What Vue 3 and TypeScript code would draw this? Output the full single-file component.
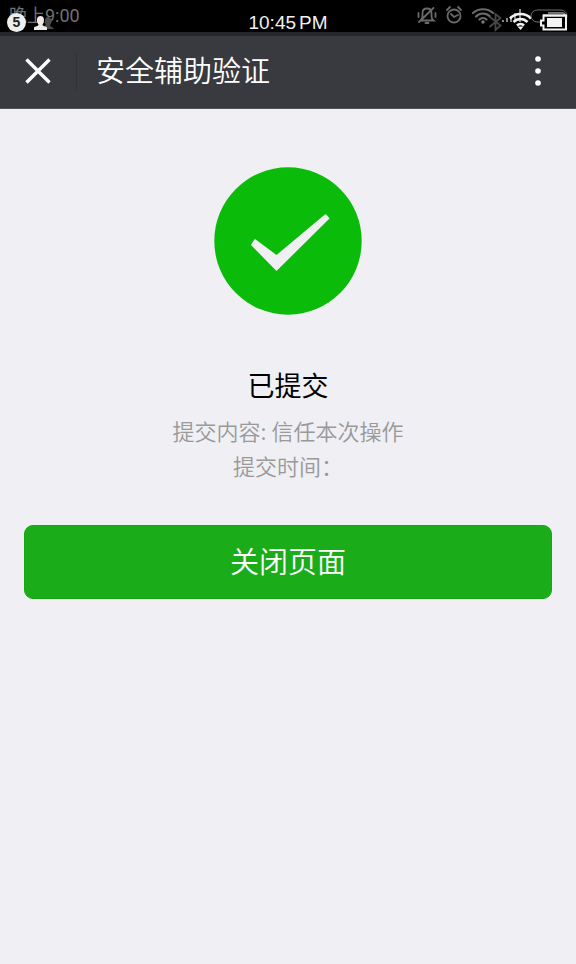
<script setup lang="ts">
import { ref } from 'vue'

interface Detail {
  label: string
  value: string
}

const title = '安全辅助验证'
const details = ref<Detail[]>([
  { label: '提交内容: ', value: '信任本次操作' },
  { label: '提交时间：', value: '' },
])

function closePage(): void {
  window.close()
}
</script>

<template>
  <div class="page">
    <div class="status">
      <div class="status-left">
        <span class="local-time">晚上9:00</span>
        <span class="count">5</span>
        <svg class="person" width="26" height="16" viewBox="0 0 26 16" aria-hidden="true">
          <path d="M10 14v-2l4-2c-2-3-1-8 2-8s5 5 2 8c0 2 3 2 4 4z" fill="#4d4d4d" />
          <path d="M2 15v-2.500c1-1.500 4.500-1 4.500-3C4 6 4.500 1 8.500 1s4.500 5 2 8.500c0 2 3.500 1.500 4.500 3V15z" fill="#ececec" />
        </svg>
      </div>
      <div class="clock"><span>10:45</span><span>PM</span></div>
      <svg class="status-right" width="160" height="32" viewBox="0 0 160 32" aria-hidden="true">
        <g fill="none" stroke="#6a6a6a" stroke-width="1.800" stroke-linecap="round">
          <path d="M4.500 20.500H17.500Q15.500 19 15.500 16V13C15.500 10 13.500 8.500 11 8.500S6.500 10 6.500 13V16Q6.500 19 4.500 20.500M9.500 23h3M3 22L17.500 8M2.500 13v4M19.500 13v4" />
          <circle cx="38" cy="16" r="6.500" />
          <path d="M35 14l3 3 4-2M31 10l3-3M45 10l-3-3" />
          <path d="M57 13c5.500-5 14.500-5 20 0M60 16.500c4-4 10-4 14 0M63.500 19.500c2-2 5-2 7 0" stroke-width="2.200" />
          <path d="M74 17l10.500 8.500-5 4.500V14l5 4-10.500 8.500" stroke="#484848" />
        </g>
        <circle cx="67" cy="22" r="1.800" fill="#777" />
        <g fill="#858585">
          <path d="M86 20h2v2h-2zM90 18h2v4h-2zM94 16h2v6h-2zM98 13h2v9h-2zM103 9h2v13h-2z" />
        </g>
        <g fill="none" stroke="#f2f2f2" stroke-width="2.600">
          <path d="M94 18.500c5.500-6 15.500-6 21 0M97.500 22c4-4 10-4 14 0M101 25.500c2-2 5-2 7 0" />
        </g>
        <path d="M101.500 26.500h6l-3 3.500z" fill="#f2f2f2" />
        <rect x="115" y="10" width="36" height="12" rx="6" fill="none" stroke="#6d6d6d" />
        <path d="M132 12h14c3 0 4 2 4 4H132z" fill="#777" />
        <path d="M127.500 15.500h22.500v14h-22.500v-4h-2.500v-5h2.500z" fill="#000" stroke="#f2f2f2" stroke-width="2" />
        <path d="M132 13h15v3h-15z" fill="#666" />
        <path d="M127 15.500h23" stroke="#f2f2f2" stroke-width="2" />
        <rect x="131" y="18" width="15" height="9" fill="#f2f2f2" />
      </svg>
    </div>

    <header class="bar">
      <button class="icon-button close" type="button" aria-label="关闭" @click="closePage">
        <svg width="26" height="26" viewBox="0 0 26 26" aria-hidden="true">
          <path d="M1.500 1.500L24.500 24.500M24.500 1.500L1.500 24.500" stroke="#fff" stroke-width="3.400" />
        </svg>
      </button>
      <h1 class="title">{{ title }}</h1>
      <button class="icon-button more" type="button" aria-label="更多">
        <svg width="6" height="32" viewBox="0 0 6 32" aria-hidden="true">
          <circle cx="3" cy="4" r="2.800" fill="#fff" />
          <circle cx="3" cy="16" r="2.800" fill="#fff" />
          <circle cx="3" cy="28" r="2.800" fill="#fff" />
        </svg>
      </button>
    </header>

    <main class="content">
      <svg class="mark" width="148" height="148" viewBox="0 0 148 148" aria-hidden="true">
        <circle cx="74" cy="74" r="73.700" fill="#0bbb0a" />
        <path d="M41 72Q39 74 37 78L62.500 104L115.500 51.500Q114 49 111.500 47L62.500 88Z" fill="#efeff4" />
      </svg>
      <h2 class="result">已提交</h2>
      <div class="details">
        <p v-for="item in details" :key="item.label" class="detail">{{ item.label }}{{ item.value }}</p>
      </div>
      <button class="primary" type="button" @click="closePage">关闭页面</button>
    </main>
  </div>
</template>

<style>
body {
  margin: 0;
  background: #efeff4;
}
</style>

<style scoped>
.page {
  min-height: 100vh;
  background: #efeff4;
  font-family: "Noto Sans CJK SC", sans-serif;
}

.status {
  position: relative;
  display: flex;
  justify-content: center;
  height: 32px;
  background: #000;
  overflow: hidden;
}

.status-left {
  position: absolute;
  left: 0;
  top: 0;
}

.local-time {
  position: absolute;
  left: 9px;
  top: 4px;
  color: #707070;
  font: 18px/24px Roboto, "Noto Sans CJK SC", sans-serif;
  white-space: nowrap;
}

.count {
  position: absolute;
  left: 7px;
  top: 13px;
  width: 19px;
  height: 19px;
  border-radius: 50%;
  background: #eee;
  color: #222;
  font: bold 14px/19px "Liberation Sans", sans-serif;
  text-align: center;
}

.person {
  position: absolute;
  left: 32px;
  top: 15px;
}

.clock {
  display: flex;
  gap: 3px;
  padding-top: 12px;
  color: #f0f0f0;
  font: 19px/22px "Liberation Sans", sans-serif;
}

.status-right {
  position: absolute;
  right: 0;
  top: 0;
}

.bar {
  display: flex;
  align-items: center;
  height: 70px;
  padding-bottom: 2px;
  border-top: 4px solid #26272c;
  border-bottom: 1px solid #515257;
  background: #393a3f;
}

.icon-button {
  display: flex;
  align-items: center;
  justify-content: center;
  height: 38px;
  padding: 0;
  border: 0;
  background: none;
  cursor: pointer;
}

.close {
  width: 77px;
  border-right: 1px solid #313237;
}

.more {
  width: 77px;
}

.title {
  flex: 1;
  margin: 0;
  padding: 0 0 4px 19px;
  color: #fff;
  font-size: 29px;
  font-weight: 350;
  line-height: 40px;
}

.content {
  display: flex;
  flex-direction: column;
  align-items: center;
  padding: 58px 24px 24px;
}

.mark {
  display: block;
}

.result {
  margin: 50px 0 0;
  color: #000;
  font-size: 27px;
  font-weight: 400;
  line-height: 40px;
}

.details {
  margin-top: 8px;
  color: #999;
  font-size: 22px;
  font-weight: 350;
  line-height: 35px;
  text-align: center;
}

.detail {
  margin: 0;
}

.primary {
  width: 100%;
  height: 74px;
  margin-top: 42px;
  padding: 0 0 4px;
  border: 1px solid #1aa519;
  border-radius: 9px;
  background: #1aad19;
  color: #fff;
  font-family: inherit;
  font-size: 29px;
  font-weight: 350;
  cursor: pointer;
}
</style>
